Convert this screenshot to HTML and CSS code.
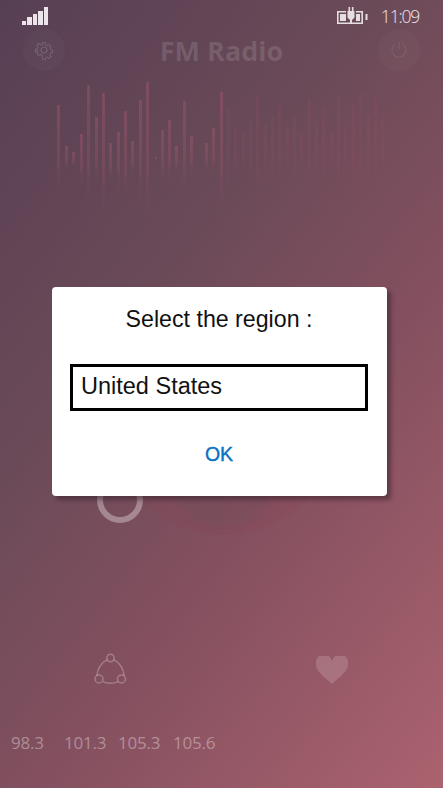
FILE: index.html
```html
<!DOCTYPE html>
<html lang="en">
  <head>
    <meta charset="UTF-8" />
    <meta name="viewport" content="width=device-width, initial-scale=1.0" />
    <title>FM Radio</title>
    <link rel="stylesheet" href="styles.css">
  </head>
  <body>
    <div class="screen">
      <!-- Phone status bar -->
      <div class="status-bar">
        <div class="signal">
          <span class="s1"></span><span class="s2"></span><span class="s3"></span><span class="s4"></span><span class="s5"></span>
        </div>
        <svg class="battery" width="32" height="18" viewBox="0 0 32 18">
          <path d="M10 4.800H1.800v11.400h24.400V4.800H20" fill="none" stroke="#e6dde3" stroke-width="1.600"/>
          <path d="M4 7h6v7H4zM20 7h4v7h-4z" fill="#e6dde3"/>
          <path d="M11.500 4h7v6.500l-2.500 2.500v4h-2v-4l-2.500-2.500zM12.500 0h1.600v4h-1.600zM15.900 0h1.600v4h-1.600z" fill="#e6dde3"/>
          <rect x="29.500" y="7" width="2" height="6" fill="#e6dde3"/>
        </svg>
        <span class="clock">11:09</span>
      </div>

      <!-- App header, dimmed by the dialog -->
      <header class="app-header">
        <div class="round-btn">
          <svg width="20" height="20" viewBox="0 0 20 20" fill="none" stroke="#fff" stroke-width="1.200">
            <circle cx="10" cy="10" r="3"/>
            <path d="M8.500 2h3l.5 2.300 1.800.8 2-1.300 2 2.100-1.200 2 .7 1.800 2.200.5v2.600l-2.200.5-.7 1.800 1.200 2-2 2.100-2-1.300-1.800.8-.5 2.300h-3L8 15.700l-1.800-.8-2 1.300-2-2.100 1.200-2-.7-1.800L.5 11.800V9.200l2.200-.5.7-1.800-1.200-2 2-2.100 2 1.300L8 4.300z" transform="translate(1 1) scale(.9)"/>
          </svg>
        </div>
        <h1 class="app-title">FM Radio</h1>
        <div class="round-btn">
          <svg class="power" width="20" height="20" viewBox="0 0 20 20" fill="none" stroke="#fff" stroke-width="1.200">
            <path d="M6 4.500a7 7 0 1 0 8 0M10 2v7"/>
          </svg>
        </div>
      </header>

      <!-- Equalizer -->
      <svg class="equalizer" width="443" height="150" viewBox="0 0 443 150">
        <defs>
          <linearGradient id="bar" x1="0" y1="0" x2="0" y2="1">
            <stop offset="0" stop-color="#b05a72" stop-opacity=".38"/>
            <stop offset=".65" stop-color="#b05a72" stop-opacity=".2"/>
            <stop offset=".72" stop-color="#b05a72" stop-opacity=".09"/>
            <stop offset="1" stop-color="#b05a72" stop-opacity="0"/>
          </linearGradient>
          <linearGradient id="bar-dim" x1="0" y1="0" x2="0" y2="1">
            <stop offset="0" stop-color="#a8506a" stop-opacity=".14"/>
            <stop offset=".6" stop-color="#a8506a" stop-opacity=".12"/>
            <stop offset="1" stop-color="#a8506a" stop-opacity="0"/>
          </linearGradient>
        </defs>
        <g fill="url(#bar)">
          <rect x="57" y="30" width="3" height="95"/>
          <rect x="65" y="71" width="3" height="25"/>
          <rect x="72" y="77" width="3" height="16"/>
          <rect x="80" y="59" width="3" height="55"/>
          <rect x="87" y="10" width="3" height="128"/>
          <rect x="95" y="42" width="3" height="72"/>
          <rect x="102" y="18" width="3" height="130"/>
          <rect x="109" y="68" width="3" height="40"/>
          <rect x="117" y="57" width="3" height="60"/>
          <rect x="124" y="36" width="3" height="94"/>
          <rect x="131" y="66" width="3" height="36"/>
          <rect x="139" y="25" width="3" height="110"/>
          <rect x="146" y="7" width="3" height="145"/>
          <rect x="155" y="82" width="2" height="4"/>
          <rect x="161" y="55" width="3" height="54"/>
          <rect x="168" y="45" width="3" height="70"/>
          <rect x="175" y="71" width="3" height="30"/>
          <rect x="183" y="26" width="3" height="100"/>
          <rect x="190" y="61" width="3" height="42"/>
          <rect x="205" y="68" width="3" height="30"/>
          <rect x="212" y="53" width="3" height="50"/>
          <rect x="220" y="17" width="3" height="125"/>
        </g>
        <g fill="url(#bar-dim)">
          <rect x="227" y="34" width="3" height="88"/>
          <rect x="234" y="52" width="3" height="52"/>
          <rect x="242" y="58" width="3" height="40"/>
          <rect x="249" y="46" width="3" height="64"/>
          <rect x="256" y="20" width="3" height="106"/>
          <rect x="264" y="50" width="3" height="50"/>
          <rect x="271" y="40" width="3" height="70"/>
          <rect x="278" y="30" width="3" height="90"/>
          <rect x="286" y="52" width="3" height="46"/>
          <rect x="293" y="40" width="3" height="70"/>
          <rect x="300" y="58" width="3" height="34"/>
          <rect x="308" y="24" width="3" height="102"/>
          <rect x="315" y="46" width="3" height="60"/>
          <rect x="322" y="34" width="3" height="84"/>
          <rect x="330" y="58" width="3" height="36"/>
          <rect x="337" y="20" width="3" height="104"/>
          <rect x="344" y="52" width="3" height="46"/>
          <rect x="352" y="30" width="3" height="90"/>
          <rect x="359" y="18" width="3" height="112"/>
          <rect x="367" y="40" width="3" height="66"/>
          <rect x="374" y="24" width="3" height="102"/>
          <rect x="381" y="44" width="3" height="60"/>
        </g>
      </svg>

      <!-- Tuner dial, mostly behind the dialog -->
      <div class="tuner">
        <div class="dial"></div>
        <div class="dial-center"></div>
        <div class="dial-ring"></div>
      </div>

      <div class="actions">
        <svg width="33" height="34" viewBox="0 0 33 34" fill="none" stroke="#fff" stroke-opacity=".26" stroke-width="1.500">
          <circle cx="16.500" cy="5" r="3.700"/>
          <circle cx="5" cy="26" r="4"/>
          <circle cx="27.500" cy="26" r="4"/>
          <path d="M13.300 6.700C8 9.500 3.800 15 2.800 22.600M19.700 6.700c5.300 2.800 9.500 8.300 10.500 15.900M8.800 28.600c5 2.200 10.400 2.200 15.400 0"/>
        </svg>
        <svg width="32" height="28" viewBox="0 0 32 28">
          <path d="M16 28C10 22 0 16 0 8a8 8 0 0 1 16-3 8 8 0 0 1 16 3c0 8-10 14-16 20z" fill="#fff" fill-opacity=".16"/>
        </svg>
      </div>

      <ul class="presets">
        <li>98.3</li>
        <li>101.3</li>
        <li>105.3</li>
        <li>105.6</li>
      </ul>

      <!-- Region dialog -->
      <div class="dialog">
        <p class="dialog-title">Select the region :</p>
        <div class="region-select">United States</div>
        <button class="ok-button">OK</button>
      </div>
    </div>
  </body>
</html>
```

FILE: styles.css
```css
* {
  margin: 0;
  padding: 0;
  box-sizing: border-box;
}

body {
  font-family: "Open Sans", Arial, sans-serif;
}

.screen {
  position: relative;
  width: 443px;
  height: 788px;
  overflow: hidden;
  background: linear-gradient(128deg, #573f53 0%, #6a4a58 35%, #84505f 62%, #ab626f 100%);
}

/* Status bar */
.status-bar {
  display: flex;
  align-items: center;
  height: 31px;
  padding: 0 24px 0 22px;
}

.signal {
  display: flex;
  align-items: flex-end;
  gap: 1px;
  height: 18px;
  margin-right: auto;
}

.signal span {
  width: 4.400px;
  background-color: #ece4ea;
}

.s1 { height: 4px; }
.s2 { height: 8px; }
.s3 { height: 11px; }
.s4 { height: 14px; }
.s5 { height: 18px; }

.battery {
  margin-right: 13px;
}

.clock {
  font-size: 17.500px;
  font-weight: 300;
  letter-spacing: -1.200px;
  color: #ece4ea;
}

/* App header */
.app-header {
  display: flex;
  justify-content: space-between;
  align-items: center;
  padding: 0 23px;
  height: 38px;
}

.round-btn {
  display: flex;
  align-items: center;
  justify-content: center;
  width: 42px;
  height: 42px;
  border-radius: 50%;
  background-color: rgba(255, 255, 255, 0.025);
}

.round-btn svg {
  opacity: 0.14;
}

.round-btn .power {
  opacity: 0.08;
}

.app-title {
  font-size: 27px;
  font-weight: 700;
  color: rgba(255, 255, 255, 0.13);
}

.equalizer {
  display: block;
  margin-top: 6px;
  filter: blur(0.5px);
}

/* Dial */
.tuner {
  position: relative;
  height: 330px;
}

.dial {
  position: absolute;
  left: 107px;
  top: 78px;
  width: 232px;
  height: 232px;
  border-radius: 50%;
  background-color: rgba(150, 55, 75, 0.1);
}

.dial-center {
  position: absolute;
  left: 171px;
  top: 198px;
  width: 104px;
  height: 104px;
  border-radius: 50%;
  background-color: rgba(85, 85, 85, 0.16);
  filter: blur(3px);
}

.dial-ring {
  position: absolute;
  left: 97px;
  top: 252px;
  width: 46px;
  height: 46px;
  border: 6px solid rgba(255, 255, 255, 0.33);
  border-radius: 50%;
}

/* Share and favourite */
.actions {
  display: flex;
  justify-content: space-between;
  align-items: center;
  padding: 0 95px 0 94px;
  margin-top: 98px;
}

.presets {
  list-style: none;
  display: grid;
  grid-template-columns: 53px 54px 55px auto;
  padding-left: 11px;
  margin-top: 44px;
  font-size: 17px;
  letter-spacing: -0.200px;
  color: rgba(255, 255, 255, 0.36);
}

/* Dialog */
.dialog {
  position: absolute;
  left: 52px;
  top: 287px;
  width: 335px;
  height: 209px;
  display: flex;
  flex-direction: column;
  padding: 0 19px 0 18px;
  background-color: #fff;
  border-radius: 4px;
  box-shadow: 4px 4px 4px rgba(50, 30, 40, 0.5);
}

.dialog-title {
  margin-top: 19px;
  text-align: center;
  font-family: "Liberation Sans", Arial, sans-serif;
  font-size: 23.200px;
  line-height: 26px;
  color: #111;
}

.region-select {
  display: flex;
  align-items: center;
  height: 47px;
  margin-top: 32px;
  padding: 0 0 2px 8px;
  border: 3px solid #000;
  font-family: "Liberation Sans", Arial, sans-serif;
  font-size: 23.500px;
  color: #111;
}

.ok-button {
  align-self: center;
  margin-top: 32px;
  border: none;
  background: none;
  font-family: "Liberation Sans", Arial, sans-serif;
  font-size: 19.500px;
  color: #0a72c4;
  -webkit-text-stroke: 0.400px #0a72c4;
}
```
